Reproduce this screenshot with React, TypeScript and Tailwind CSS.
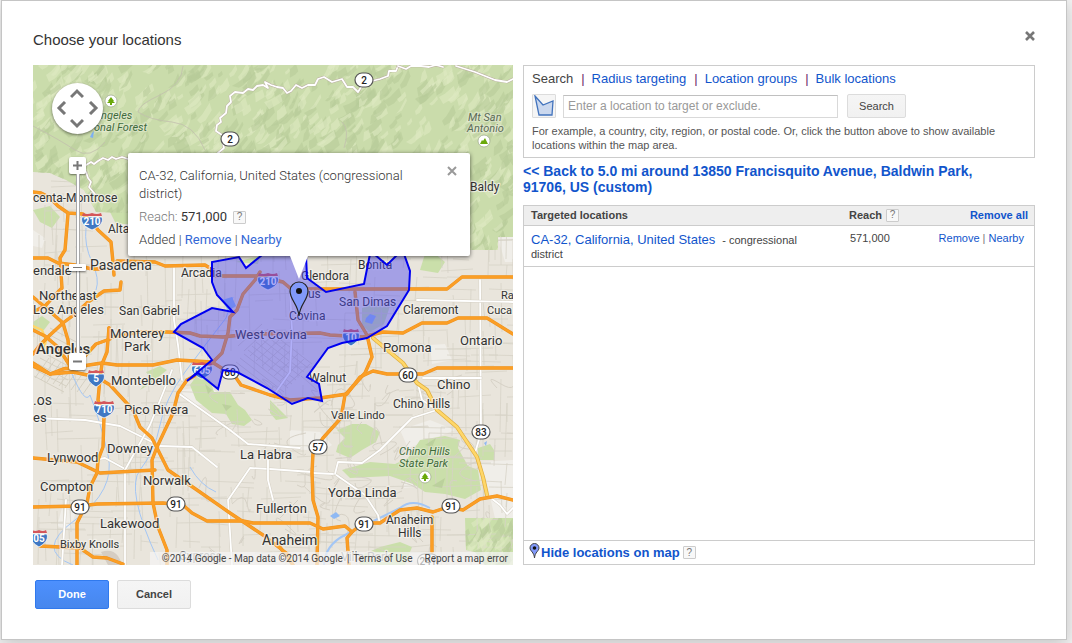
import React, { useState } from "react";

type Label = {
  text: string;
  x: number;
  y: number;
  size?: number;
  kind?: "city" | "major" | "park" | "peak" | "faint";
};

const LABELS: Label[] = [
  { text: "centa-Montrose", x: 33, y: 202 },
  { text: "Alta", x: 108, y: 233 },
  { text: "endale", x: 33, y: 275, size: 13 },
  { text: "Pasadena", x: 90, y: 270, size: 14 },
  { text: "Arcadia", x: 181, y: 277 },
  { text: "Northeast", x: 39, y: 300, size: 13 },
  { text: "Los Angeles", x: 33, y: 314, size: 13 },
  { text: "San Gabriel", x: 119, y: 315 },
  { text: "Monterey", x: 110, y: 338, size: 13 },
  { text: "Park", x: 124, y: 351, size: 13 },
  { text: "Angeles", x: 36, y: 354, size: 15, kind: "major" },
  { text: "Montebello", x: 111, y: 385, size: 13 },
  { text: "Glendora", x: 301, y: 280 },
  { text: "Bonita", x: 358, y: 269 },
  { text: "us", x: 308, y: 298 },
  { text: "San Dimas", x: 339, y: 306 },
  { text: "Covina", x: 289, y: 320 },
  { text: "West Covina", x: 235, y: 339, size: 13 },
  { text: "Claremont", x: 403, y: 314 },
  { text: "Ra", x: 501, y: 299, size: 11 },
  { text: "Cuca", x: 487, y: 314, size: 11 },
  { text: "Ontario", x: 460, y: 345, size: 13 },
  { text: "Pomona", x: 383, y: 352, size: 13 },
  { text: "Walnut", x: 309, y: 382 },
  { text: "Chino", x: 437, y: 389, size: 13 },
  { text: "Chino Hills", x: 393, y: 408 },
  { text: "Valle Lindo", x: 331, y: 419, size: 11 },
  { text: ".os", x: 33, y: 405, size: 14 },
  { text: "es", x: 33, y: 422, size: 13 },
  { text: "Pico Rivera", x: 124, y: 414, size: 13 },
  { text: "Downey", x: 107, y: 453, size: 13 },
  { text: "Lynwood", x: 47, y: 462, size: 13 },
  { text: "Norwalk", x: 143, y: 485, size: 13 },
  { text: "Compton", x: 40, y: 491, size: 13 },
  { text: "Lakewood", x: 100, y: 528, size: 13 },
  { text: "Bixby Knolls", x: 60, y: 548, size: 11 },
  { text: "La Habra", x: 240, y: 459, size: 13 },
  { text: "Yorba Linda", x: 328, y: 497, size: 13 },
  { text: "Fullerton", x: 256, y: 513, size: 13 },
  { text: "Anaheim", x: 262, y: 545, size: 14 },
  { text: "Anaheim", x: 386, y: 524 },
  { text: "Hills", x: 398, y: 537 },
  { text: "Chino Hills", x: 399, y: 455, size: 11, kind: "park" },
  { text: "State Park", x: 399, y: 467, size: 11, kind: "park" },
  { text: "ngeles", x: 101, y: 119, size: 11, kind: "park" },
  { text: "onal Forest", x: 94, y: 131, size: 11, kind: "park" },
  { text: "Mt San", x: 468, y: 121, size: 11, kind: "peak" },
  { text: "Antonio", x: 467, y: 132, size: 11, kind: "peak" },
  { text: "Baldy", x: 470, y: 191 },
  { text: "Cypress", x: 179, y: 560, kind: "faint" },
  { text: "Villa Park", x: 341, y: 561, kind: "faint" },
];

const LABEL_CLASS = {
  city: "fill-[#333333]",
  major: "fill-[#333333] font-medium",
  park: "fill-[#3f6b3c] italic",
  peak: "fill-[#5b6b57] italic",
  faint: "fill-[#777777]",
};

const FREEWAYS = [
  "33,192 41,193 49,197 58,206 68,213 83,214 92,222 98,230 111,242 113,262 114,275",
  "68,214 65,250 60,258 62,288 54,296 45,306 33,312",
  "33,258 48,258 58,263 75,265 92,269 102,269",
  "117,261 155,262 165,266 205,265 213,270 213,276 258,276 283,282 290,288 307,289 447,289 462,277 513,277",
  "121,282 120,290 104,291 88,302 75,314 63,323 50,335 40,345 33,354",
  "33,297 45,307 63,323 68,340 70,366",
  "33,330 45,336 58,347 70,366 85,356 96,344 110,339 109,328",
  "109,328 107,352 102,364 100,378",
  "260,272 255,280 243,294 237,310 230,317 228,333 222,353 212,363 198,374 187,380 178,393 173,413 157,447 152,460 153,503 158,527 167,550 167,565",
  "33,363 50,374 63,369 102,363 117,365 153,365 177,360 212,362 223,369 232,372 241,385 270,395 290,400 320,398 347,394 360,377 373,371 387,374 423,374 437,368 513,368",
  "112,337 140,332 167,332 190,333 200,336 223,337 250,334 320,333 330,335 363,337 383,332 403,333 422,323 447,323 458,318 487,318 513,334",
  "355,292 358,320 367,335 372,357 365,373 345,395 341,418 323,438 313,453 312,472 313,500 318,517 317,565",
  "33,507 80,506 97,504 163,503 183,505 192,513 207,521 243,521 253,523 310,523 323,529 345,526 352,532 363,523 380,523 400,510 417,508 433,512 448,507 463,510 480,499 497,496 513,500",
  "352,532 347,538 349,565",
  "432,517 432,552",
  "277,543 293,565",
  "33,366 50,374 73,372 97,377 110,385 133,410 140,427 152,438 158,450 168,470 197,490 230,513 263,535 290,556",
  "100,378 98,400 104,417 103,447 98,460 97,473 90,487 87,503 77,523 77,565",
  "33,458 77,462 100,473 155,470",
  "40,546 80,548 93,557 107,558 123,564",
];

const LOCAL_ROADS = [
  "174,268 174,320 178,345 182,380",
  "33,418 85,420 120,426 160,446 192,447 217,467",
  "93,460 105,458 127,470",
  "178,393 230,430 248,444 300,448",
  "312,472 270,469 250,468 228,500 232,565",
  "312,473 335,474 365,495 378,515 380,524",
  "335,474 338,462 362,463 380,450 412,418 437,410",
  "480,280 481,433 475,453",
  "487,495 500,505 507,514 513,508",
  "290,290 292,330 290,372 276,392",
  "125,470 125,565",
  "125,470 150,425 163,393 172,370",
  "66,500 62,565",
  "417,300 513,302",
  "417,380 422,400 437,410",
  "423,378 481,378",
  "268,455 268,480 273,500",
];

const MOUNTAIN_ROADS = [
  "86,165 91,162 94,164 98,161 103,158 108,160 112,157 116,159 122,157 128,159",
  "86,172 88,178 91,182 89,187 94,193 99,200",
  "218,153 224,148 223,143 226,138 222,135 216,131 217,125 221,122 220,118 226,113 227,106 231,102 230,96 235,92 243,93 248,89 253,90 257,86 263,85 268,88 265,82 271,85 277,87 283,88 287,93 291,91 296,85 302,88 308,85 315,85 318,79 324,77 332,82 342,79 347,87 353,87 358,92 363,84 372,81 380,79 388,76 389,71 396,71 398,66",
  "398,66 406,69 411,66 421,66 429,67 436,65 443,67",
  "456,66 475,72 495,80 507,82 513,79",
];

const DISTRICT =
  "306,255 262,255 246,268 239,257 212,262 212,282 217,295 233,312 212,308 181,324 174,332 203,348 212,360 187,381 198,373 218,389 223,370 237,372 267,388 292,404 308,398 322,401 319,384 307,377 328,348 342,343 367,338 387,326 409,290 410,271 404,254 398,254 387,265 374,254 370,254 364,284 326,292 307,278";

const PARKS = [
  "337,430 352,424 366,424 380,432 376,442 362,450 350,458 336,452 338,445 345,438",
  "408,458 420,440 445,436 460,440 458,448 468,466 478,470 481,490 465,499 445,494 425,492 413,484 390,476 350,478 342,470 370,462 395,464",
  "465,518 513,518 513,565 485,565 475,552 466,550",
  "190,385 198,374 210,380 214,392 230,392 238,405 245,410 252,420 244,426 232,424 226,414 212,413 196,400",
  "33,210 50,206 60,217 52,228 40,222",
  "362,308 372,304 390,306 384,324 370,332 362,326",
  "410,248 425,254 420,270 438,273 445,262 428,248",
  "140,390 150,377 146,372 160,366 167,370 150,384",
  "360,556 380,547 400,542 412,547 405,565 360,565",
  "33,322 42,316 50,322 44,330 33,331",
  "110,212 128,212 128,224 116,224",
  "478,448 490,444 494,450 494,460 478,460",
  "235,262 260,256 258,264",
  "270,400 277,407 288,418 276,420 270,413",
];

const PALE_AREAS = [
  "33,230 45,238 42,248 33,246",
  "180,390 210,386 224,398 212,406 190,404",
  "290,430 320,432 332,445 322,452 290,448",
  "400,430 430,420 455,430 440,436 408,448",
  "478,462 513,460 513,518 495,518 486,480",
  "430,345 445,344 452,360 432,364",
  "62,508 76,512 70,530 57,526",
  "402,476 416,474 426,486 404,488",
  "498,238 513,236 513,262 505,262",
];

const HILLS =
  "33,65 513,65 513,237 498,237 498,250 128,250 128,213 96,212 84,190 66,180 50,173 33,172";

function seeded(seed: number) {
  let s = seed;
  return () => {
    s = (s * 16807) % 2147483647;
    return s / 2147483647;
  };
}

function hillShades(count: number, left: number, top: number, w: number, h: number) {
  const rnd = seeded(77 + count);
  const out: { d: string; light: boolean }[] = [];
  for (let i = 0; i < count; i++) {
    const x = left + rnd() * w;
    const y = top + rnd() * h;
    const len = 6 + rnd() * 16;
    const dx = len * (0.4 + rnd() * 0.5);
    const dy = -len * (0.4 + rnd() * 0.6);
    const t = 3 + rnd() * 6;
    out.push({
      d: `M${x.toFixed(0)} ${y.toFixed(0)}l${(dx * 0.4).toFixed(1)} ${(dy * 0.3).toFixed(1)}l${(dx * 0.6).toFixed(1)} ${(dy * 0.7).toFixed(1)}l${(t * 0.3).toFixed(1)} ${t.toFixed(1)}l${(-dx * 0.5).toFixed(1)} ${(-dy * 0.6).toFixed(1)}l${(-t * 0.7).toFixed(1)} ${(t * 0.4).toFixed(1)}z`,
      light: i % 2 === 0,
    });
  }
  return out;
}

function streets() {
  const rnd = seeded(2014);
  let d = "";
  for (let i = 0; i < 620; i++) {
    const x = 33 + Math.round(rnd() * 80) * 6;
    const y = 175 + Math.round(rnd() * 64) * 6;
    const l = 12 + Math.round(rnd() * 44);
    const lean = Math.round((rnd() - 0.5) * 4);
    d += rnd() > 0.5 ? `M${x} ${y}l${l} ${lean}` : `M${x} ${y}l${lean} ${l}`;
  }
  return d;
}

function diagonalStreets() {
  let d = "";
  for (let i = 0; i < 9; i++) {
    d += `M${238 + i * 6} ${346 + i * 5}l24 -22M${236 + i * 4} ${362 - i * 4}l44 34`;
    d += `M${35 + i * 6} ${378 + i * 2}l14 -20M${34 + i * 2} ${376 - i * 6}l30 16`;
  }
  return d;
}

function curvyLanes() {
  const rnd = seeded(91);
  let d = "";
  for (let i = 0; i < 60; i++) {
    const x = 210 + rnd() * 290;
    const y = 385 + rnd() * 170;
    const a = () => Math.round((rnd() - 0.5) * 30);
    d += `M${x.toFixed(0)} ${y.toFixed(0)}q${a()} ${a()} ${a()} ${a()}t${a()} ${a()}`;
  }
  return d;
}

const SHADES = hillShades(1000, 26, 66, 492, 195);
const SOUTH_SHADES = hillShades(50, 462, 520, 50, 50);
const STREETS = streets();
const DIAGONALS = diagonalStreets();
const LANES = curvyLanes();

function RouteOval({ x, y, n }: { x: number; y: number; n: string }) {
  const w = n.length > 2 ? 21 : 18;
  return (
    <g>
      <rect x={x - w / 2} y={y - 7} width={w} height="14" rx="7" fill="#fff" stroke="#555" strokeWidth="1.2" />
      <text x={x} y={y + 4} textAnchor="middle" className="fill-[#222222] text-[10px] font-medium">
        {n}
      </text>
    </g>
  );
}

function Interstate({ x, y, n }: { x: number; y: number; n: string }) {
  const h = n.length > 2 ? 10 : 8;
  return (
    <g transform={`translate(${x} ${y})`}>
      <path
        d={`M${-h} -4H${h}C${h + 2} 2 ${h - 3} 6 0 9C${3 - h} 6 ${-h - 2} 2 ${-h} -4Z`}
        fill="#3f78c3"
        stroke="#fff"
        strokeWidth="0.8"
      />
      <path d={`M${1 - h} -8Q${-h / 2} -6 0 -8Q${h / 2} -6 ${h - 1} -8L${h} -5H${-h}Z`} fill="#d4565b" />
      <text y="4" textAnchor="middle" className="fill-white text-[10px] font-bold">
        {n}
      </text>
    </g>
  );
}

function ParkBadge({ x, y, peak }: { x: number; y: number; peak?: boolean }) {
  return (
    <g transform={`translate(${x} ${y})`}>
      <circle r="6" fill="#fff" stroke="#9aa58a" strokeWidth="0.7" />
      <path d={peak ? "M-4 3L-2-1 -1 0 1-3 4 3Z" : "M0-4L3 0H2L4 2H1V4H-1V2H-4L-2 0H-3Z"} fill="#6aa90b" />
    </g>
  );
}

function MapDrawing() {
  return (
    <svg
      viewBox="33 65 480 500"
      preserveAspectRatio="xMinYMin slice"
      className="absolute inset-0 h-full w-full font-['Roboto',sans-serif]"
      role="img"
      aria-label="Map of the Los Angeles area with the targeted district highlighted"
    >
      <defs>
        <clipPath id="hills">
          <polygon points={HILLS} />
        </clipPath>
        <clipPath id="south-hills">
          <polygon points={PARKS[2]} />
        </clipPath>
      </defs>
      <rect x="33" y="65" width="480" height="500" fill="#e9e5dc" />
      {PALE_AREAS.map((p) => (
        <polygon key={p} points={p} fill="#f0eee9" />
      ))}
      {PARKS.map((p) => (
        <polygon key={p} points={p} fill="#cadfaa" />
      ))}
      <path d={STREETS} stroke="#d6d1c5" strokeWidth="1" fill="none" opacity="0.75" />
      <path d={DIAGONALS} stroke="#cfcabc" strokeWidth="1" fill="none" opacity="0.8" />
      <path d={LANES} stroke="#d6d1c6" strokeWidth="1" fill="none" />
      <path d="M101 552Q112 548 118 556L123 565H108Z" fill="#d5cdc3" />
      <g fill="none" stroke="#a3c6f5" strokeWidth="1">
        <path d="M86 228Q84 245 92 262T96 290" />
        <path d="M72 374Q85 405 90 395Q100 420 108 455T75 520T73 565" />
        <path d="M233 297L226 318Q205 345 185 372T160 425T140 470T158 560" />
        <path d="M324 565Q325 545 345 535T400 508Q412 498 430 508" strokeWidth="2" />
        <path d="M190 467Q200 485 216 492" />
      </g>
      <path
        d="M222 300L232 297L236 306L228 311ZM366 318L370 314L376 316L372 324L365 322ZM330 516L336 512L340 516L334 519ZM484 443L487 441L486 446ZM196 368L205 365L203 371Z"
        fill="#8fb9f3"
      />

      <g clipPath="url(#hills)">
        <rect x="33" y="65" width="480" height="190" fill="#cadcab" />
        {SHADES.map((s, i) => (
          <path key={i} d={s.d} fill={s.light ? "#dde9c2" : "#b7cc99"} opacity="0.6" />
        ))}
        <path
          d="M183 66Q182 85 160 95T138 112Q150 120 172 122T205 150M40 192Q65 205 75 210T105 215M33 126Q60 140 75 150T105 142M342 122Q350 130 344 148"
          stroke="#c2bfae"
          fill="none"
          opacity="0.8"
        />
      </g>
      <path d="M92 133L94 131L93 138L90 137Z" fill="#7db0f4" />
      <g clipPath="url(#south-hills)">
        {SOUTH_SHADES.map((s, i) => (
          <path key={i} d={s.d} fill={s.light ? "#dde9c2" : "#b7cc99"} opacity="0.6" />
        ))}
      </g>
      <path
        d="M432 486L445 478L442 488ZM425 445L436 438L432 447ZM205 384L212 390L208 394ZM222 404L232 406L226 411Z"
        fill="#b5cb96"
        opacity="0.7"
      />

      <g fill="none" strokeLinejoin="round" strokeLinecap="round">
        {MOUNTAIN_ROADS.map((p) => (
          <g key={p}>
            <polyline points={p} stroke="#b9aaa0" strokeWidth="2.6" />
            <polyline points={p} stroke="#ffffff" strokeWidth="1.8" />
          </g>
        ))}
        {LOCAL_ROADS.map((p) => (
          <g key={p}>
            <polyline points={p} stroke="#d5d0c4" strokeWidth="2.8" />
            <polyline points={p} stroke="#ffffff" strokeWidth="1.8" />
          </g>
        ))}
        <polyline
          points="373,338 403,363 417,383 427,390 437,410 457,427 477,457 483,477 487,495"
          stroke="#e0ae3e"
          strokeWidth="4"
        />
        <polyline
          points="373,338 403,363 417,383 427,390 437,410 457,427 477,457 483,477 487,495"
          stroke="#ffd768"
          strokeWidth="2.6"
        />
        <polyline points="33,326 42,330 46,340 44,350" stroke="#ffd768" strokeWidth="2.4" />
        {FREEWAYS.map((p) => (
          <polyline key={p} points={p} stroke="#ee921e" strokeWidth="3.4" />
        ))}
        {FREEWAYS.map((p) => (
          <polyline key={p} points={p} stroke="#fb9e25" strokeWidth="2.4" />
        ))}
      </g>

      <RouteOval x={364} y={80} n="2" />
      <RouteOval x={230} y={139} n="2" />
      <RouteOval x={230} y={372} n="60" />
      <RouteOval x={408} y={375} n="60" />
      <RouteOval x={481} y={432} n="83" />
      <RouteOval x={318} y={447} n="57" />
      <RouteOval x={80} y={507} n="91" />
      <RouteOval x={176} y={504} n="91" />
      <RouteOval x={451} y={506} n="91" />
      <RouteOval x={364} y={524} n="91" />
      <RouteOval x={428} y={561} n="241" />
      <Interstate x={92} y={221} n="210" />
      <Interstate x={268} y={281} n="210" />
      <Interstate x={96} y={378} n="5" />
      <Interstate x={104} y={409} n="710" />
      <Interstate x={202} y={370} n="605" />
      <Interstate x={351} y={337} n="10" />
      <Interstate x={39} y={538} n="05" />
      <ParkBadge x={111} y={101} />
      <ParkBadge x={425} y={477} />
      <ParkBadge x={484} y={141} peak />

      {LABELS.map((l) => (
        <text
          key={`${l.text}${l.x}${l.y}`}
          x={l.x}
          y={l.y}
          fontSize={l.size ?? 12}
          className={LABEL_CLASS[l.kind ?? "city"]}
          stroke="#f4f2ec"
          strokeOpacity={l.kind === "park" || l.kind === "peak" ? 0.4 : 0.8}
          strokeWidth={2.4}
          strokeLinejoin="round"
          paintOrder="stroke"
        >
          {l.text}
        </text>
      ))}

      <polygon points={DISTRICT} fill="#4a46f0" fillOpacity="0.43" stroke="#0000f0" strokeWidth="2" />

      <g transform="translate(299 292)">
        <path d="M0 24C-1 12-9 8-9 -1A9 9 0 0 1 9 -1C9 8 1 12 0 24Z" fill="#8199fa" stroke="#222" strokeWidth="1.2" />
        <circle r="3" cy="-1" fill="#111" />
      </g>
    </svg>
  );
}

function HelpBadge({ label }: { label: string }) {
  return (
    <button
      type="button"
      aria-label={label}
      className="inline-flex h-[13px] w-[13px] items-center justify-center rounded-[1px] border border-[#cccccc] bg-[#f8f8f8] font-['Liberation_Sans',sans-serif] text-[10px] font-normal leading-none text-[#777777]"
    >
      ?
    </button>
  );
}

function Chevron({ d, label, place }: { d: string; label: string; place: string }) {
  return (
    <button type="button" aria-label={label} className={`flex items-center justify-center ${place}`}>
      <svg width="14" height="14" viewBox="0 0 14 14" fill="none" stroke="#777" strokeWidth="3">
        <path d={d} />
      </svg>
    </button>
  );
}

function MapControls() {
  const [zoom, setZoom] = useState(9);
  const knob =
    "flex h-[17px] w-[17px] items-center justify-center rounded-[2px] bg-white shadow-[0_1px_2px_rgba(0,0,0,0.5)]";
  return (
    <div className="absolute left-[19px] top-[18px] flex flex-col items-center">
      <div className="grid h-[51px] w-[51px] grid-cols-3 grid-rows-3 rounded-full bg-white p-1 shadow-[0_1px_3px_rgba(0,0,0,0.5)]">
        <Chevron label="Pan up" place="col-start-2 row-start-1" d="M1 10L7 4L13 10" />
        <Chevron label="Pan left" place="col-start-1 row-start-2" d="M9 1L3 7L9 13" />
        <Chevron label="Pan right" place="col-start-3 row-start-2" d="M5 1L11 7L5 13" />
        <Chevron label="Pan down" place="col-start-2 row-start-3" d="M1 4L7 10L13 4" />
      </div>
      <button type="button" aria-label="Zoom in" className={`mt-[23px] ${knob}`} onClick={() => setZoom(zoom + 1)}>
        <svg width="9" height="9" viewBox="0 0 9 9" stroke="#777" strokeWidth="2">
          <path d="M0 4.5H9M4.5 0V9" />
        </svg>
      </button>
      <div className="relative flex h-[179px] w-[17px] justify-center">
        <div className="h-full w-1 border-x border-[#a8a8a8] bg-white" />
        <div className="absolute inset-x-0 top-[90px] flex h-[7px] items-center justify-center rounded-[1px] bg-white shadow-[0_1px_2px_rgba(0,0,0,0.5)]">
          <div className="h-px w-[9px] bg-[#777777]" />
        </div>
        <input
          type="range"
          aria-label="Zoom level"
          min={0}
          max={18}
          value={zoom}
          onChange={(e) => setZoom(Number(e.target.value))}
          className="absolute inset-0 h-full w-full opacity-0 [writing-mode:vertical-lr]"
        />
      </div>
      <button type="button" aria-label="Zoom out" className={knob} onClick={() => setZoom(zoom - 1)}>
        <svg width="9" height="9" viewBox="0 0 9 9" stroke="#777" strokeWidth="2">
          <path d="M0 4.5H9" />
        </svg>
      </button>
    </div>
  );
}

function InfoWindow() {
  return (
    <div className="absolute left-[95px] top-[88px] w-[342px] rounded-[2px] bg-white px-[11px] pb-[7px] pt-[14px] font-['Roboto',sans-serif] text-[13px] font-light leading-[18px] text-[#333333] shadow-[0_1px_4px_rgba(0,0,0,0.6)]">
      <button type="button" aria-label="Close info window" className="absolute right-[13px] top-[13px]">
        <svg width="10" height="10" viewBox="0 0 10 10" stroke="#999" strokeWidth="2">
          <path d="M1 1L9 9M9 1L1 9" />
        </svg>
      </button>
      <p className="w-[280px]">CA-32, California, United States (congressional district)</p>
      <p className="mt-[5px] flex items-center gap-[6px]">
        <span>
          <span className="text-[#777777]">Reach:</span> <span className="font-normal">571,000</span>
        </span>
        <HelpBadge label="About reach" />
      </p>
      <p className="mt-[5px]">
        Added |{" "}
        <a href="#remove" className="font-normal text-[#3367d6]">
          Remove
        </a>{" "}
        |{" "}
        <a href="#nearby" className="font-normal text-[#3367d6]">
          Nearby
        </a>
      </p>
      <svg
        width="18"
        height="23"
        viewBox="0 0 18 23"
        className="absolute left-[162px] top-full"
        aria-hidden="true"
      >
        <path d="M0 0L9 23L18 0Z" fill="#fff" />
      </svg>
    </div>
  );
}

function MapPane() {
  return (
    <section aria-label="Map" className="relative min-h-[500px] overflow-hidden">
      <MapDrawing />
      <MapControls />
      <InfoWindow />
      <div className="absolute bottom-0 right-0 flex h-[13px] items-center bg-[#f5f5f5]/70 pl-3 pr-[5px] font-['Roboto',sans-serif] text-[10px] leading-[13px] text-[#444444]">
        <span>©2014 Google - Map data ©2014 Google</span>
        <span className="mx-1">|</span>
        <a href="#terms">Terms of Use</a>
        <a href="#report" className="ml-3">
          Report a map error
        </a>
      </div>
    </section>
  );
}

const TABS = ["Radius targeting", "Location groups", "Bulk locations"];
const GRAY_BUTTON =
  "rounded-[2px] border border-[#dcdcdc] bg-gradient-to-b from-[#f5f5f5] to-[#f1f1f1] text-[11px] text-[#444444]";

function SearchBox() {
  return (
    <section className="border border-[#cccccc] px-2 pb-[5px] pt-1">
      <nav className="flex text-[13px] leading-[17px]">
        <span>Search</span>
        {TABS.map((t) => (
          <React.Fragment key={t}>
            <span className="ml-2 mr-[7px] text-[#6b1b6b]">|</span>
            <a href="#tab" className="text-[#1155cc]">
              {t}
            </a>
          </React.Fragment>
        ))}
      </nav>
      <div className="mt-[7px] flex items-center">
        <button
          type="button"
          aria-label="Show locations within the map area"
          className="flex h-6 w-6 items-center justify-center rounded-[1px] border border-[#dcdcdc] bg-[#f5f5f5]"
        >
          <svg width="22" height="22" viewBox="0 0 22 22">
            <path d="M2 1L10 10L20 6L19 20H6Z" fill="#cbd8ee" stroke="#4273bd" strokeWidth="1.3" />
          </svg>
        </button>
        <input
          type="text"
          aria-label="Location"
          placeholder="Enter a location to target or exclude."
          className="ml-[7px] h-[23px] w-[275px] border border-[#d9d9d9] border-t-[#c0c0c0] bg-white px-1 text-[12px] placeholder:text-[#999999]"
        />
        <button type="button" className={`ml-[9px] h-6 w-[59px] ${GRAY_BUTTON}`}>
          Search
        </button>
      </div>
      <p className="mt-[6px] text-[11px] leading-[14px] text-[#555555]">
        For example, a country, city, region, or postal code. Or, click the button above to show available locations
        within the map area.
      </p>
    </section>
  );
}

function LocationsTable() {
  return (
    <section className="flex flex-1 flex-col border border-[#cccccc]">
      <table className="w-full table-fixed border-collapse text-left text-[11px] leading-[14px]">
        <colgroup>
          <col className="w-[318px]" />
          <col className="w-[72px]" />
          <col />
        </colgroup>
        <thead>
          <tr className="h-[19px] border-b border-[#cccccc] bg-[#eeeeee]">
            <th className="pl-[7px] font-bold">Targeted locations</th>
            <th className="pl-[7px] font-bold">
              <span className="flex items-center gap-1">
                Reach
                <HelpBadge label="About reach" />
              </span>
            </th>
            <th className="pr-[6px] text-right font-bold">
              <a href="#remove-all" className="text-[#1155cc]">
                Remove all
              </a>
            </th>
          </tr>
        </thead>
        <tbody>
          <tr className="border-b border-[#cccccc] align-top">
            <td className="pb-[5px] pl-[7px] pr-[38px] pt-[7px]">
              <a href="#district" className="mr-[7px] text-[13px] text-[#1155cc]">
                CA-32, California, United States
              </a>
              - congressional district
            </td>
            <td className="pl-2 pt-[5px]">571,000</td>
            <td className="pr-[10px] pt-[5px] text-right text-[#777777]">
              <a href="#remove" className="text-[#1155cc]">
                Remove
              </a>{" "}
              |{" "}
              <a href="#nearby" className="text-[#1155cc]">
                Nearby
              </a>
            </td>
          </tr>
        </tbody>
      </table>
      <div className="mt-auto flex h-6 items-center border-t border-[#cccccc] pl-[5px]">
        <svg width="11" height="16" viewBox="0 0 11 16" className="-mt-1" aria-hidden="true">
          <path d="M5.5 15C5 9 1 8 1 5A4.5 4.5 0 0 1 10 5C10 8 6 9 5.5 15Z" fill="#8199fa" stroke="#444" />
          <circle cx="5.5" cy="5" r="1.8" fill="#111" />
        </svg>
        <a href="#hide" className="ml-px mr-[3px] pt-px text-[13px] font-bold text-[#1155cc]">
          Hide locations on map
        </a>
        <HelpBadge label="About locations on the map" />
      </div>
    </section>
  );
}

export default function App() {
  return (
    <div className="min-h-screen bg-[#f3f3f3] pb-[3px] pl-px pr-[5px] font-['Liberation_Sans',Arial,sans-serif] text-[#444444]">
      <main
        role="dialog"
        aria-labelledby="dialog-title"
        className="border border-[#c5c5c5] bg-white px-[31px] pb-[30px] shadow-[0_4px_16px_rgba(0,0,0,0.2)]"
      >
        <header className="flex h-16 items-center justify-between pt-[14px]">
          <h1 id="dialog-title" className="text-[15px] leading-[20px] text-[#333333]">
            Choose your locations
          </h1>
          <button type="button" aria-label="Close" className="-mt-2">
            <svg width="10" height="10" viewBox="0 0 10 10" stroke="#777" strokeWidth="2.6">
              <path d="M1 1L9 9M9 1L1 9" />
            </svg>
          </button>
        </header>
        <div className="grid grid-cols-[480fr_512fr] gap-[10px]">
          <MapPane />
          <div className="flex min-w-0 flex-col">
            <SearchBox />
            <a
              href="#back"
              className="mb-[10px] mt-[5px] pr-6 text-[14px] font-bold leading-[16px] text-[#1155cc]"
            >
              &lt;&lt; Back to 5.0 mi around 13850 Francisquito Avenue, Baldwin Park, 91706, US (custom)
            </a>
            <LocationsTable />
          </div>
        </div>
        <footer className="mt-[15px] flex gap-2 pl-[2px]">
          <button
            type="button"
            className="h-[29px] w-[74px] rounded-[2px] border border-[#3079ed] bg-gradient-to-b from-[#4d90fe] to-[#4787ed] text-[11px] font-bold text-white"
          >
            Done
          </button>
          <button type="button" className={`h-[29px] w-[74px] font-bold ${GRAY_BUTTON}`}>
            Cancel
          </button>
        </footer>
      </main>
    </div>
  );
}
